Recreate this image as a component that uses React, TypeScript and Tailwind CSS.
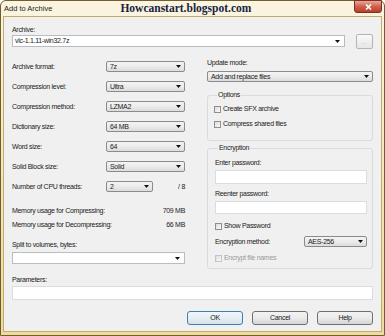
import React from 'react'

const font = "font-['Liberation_Sans',Arial,sans-serif]"
const txt = 'text-[7px] leading-[10px] tracking-[-0.3px] text-[#1b1b1b]'

const Arrow = () => (
  <svg width="5" height="3" viewBox="0 0 5 3" className="shrink-0">
    <path d="M0 0h5L2.5 3z" fill="#111" />
  </svg>
)

// non-editable dropdown, win7 gradient look
const Select = ({ value, className = '' }: { value: string; className?: string }) => (
  <div
    className={`h-[11px] flex items-center justify-between pl-[3px] pr-[3px] rounded-[2px] border border-[#8b8b8b] bg-gradient-to-b from-[#f4f4f4] via-[#ebebeb] to-[#dcdcdc] ${className}`}
  >
    <span className={txt}>{value}</span>
    <Arrow />
  </div>
)

// editable combo, white field
const Combo = ({ value = '', className = '' }: { value?: string; className?: string }) => (
  <div
    className={`h-[12px] flex items-center justify-between pl-[2px] pr-[4px] border border-[#b9bcc2] bg-white ${className}`}
  >
    <span className={txt}>{value}</span>
    <Arrow />
  </div>
)

const Field = ({ className = '' }: { className?: string }) => (
  <div className={`bg-white border border-[#d7dde3] ${className}`} />
)

const Check = ({ label, disabled = false }: { label: string; disabled?: boolean }) => (
  <div className="h-[10px] flex items-center gap-[2px]">
    <div
      className={`w-[7px] h-[7px] border bg-gradient-to-br from-[#dcdcdc] to-[#fbfbfb] ${
        disabled ? 'border-[#c4c4c4]' : 'border-[#8f8f8f]'
      }`}
    />
    <span className={`${txt} ${disabled ? '!text-[#9a9a9a]' : ''}`}>{label}</span>
  </div>
)

const Group = ({ title, children, className = '' }: { title: string; children: React.ReactNode; className?: string }) => (
  <fieldset className={`border border-[#d5dce2] rounded-[3px] ${className}`}>
    <legend className={`${txt} ml-[3px] px-[1px]`}>{title}</legend>
    {children}
  </fieldset>
)

const Btn = ({ label, primary = false }: { label: string; primary?: boolean }) => (
  <button
    className={`w-[56px] h-[14px] rounded-[3px] border flex items-center justify-center ${txt} ${
      primary
        ? 'border-[#3c7fb1] bg-gradient-to-b from-[#f1f6fa] via-[#e6eef4] to-[#d6e1ea]'
        : 'border-[#707070] bg-gradient-to-b from-[#f2f2f2] via-[#ebebeb] to-[#d4d4d4]'
    }`}
  >
    {label}
  </button>
)

const leftRows: [string, string][] = [
  ['Archive format:', '7z'],
  ['Compression level:', 'Ultra'],
  ['Compression method:', 'LZMA2'],
  ['Dictionary size:', '64 MB'],
  ['Word size:', '64'],
  ['Solid Block size:', 'Solid'],
]

export default function App() {
  return (
    <div className={`w-[385px] h-[336px] ${font}`}>
      <div className="w-full h-full flex flex-col px-[2px] pb-[3px] rounded-t-[6px] border border-[#6f5e34] bg-gradient-to-b from-[#fbf5e1] via-[#f4e7b9] to-[#efdb9c]">
        {/* Title bar */}
        <div className="h-[15px] flex items-start">
          <span className="pl-[1px] mt-[3px] text-[7.5px] leading-[10px] text-[#222]">Add to Archive</span>
          <span className="ml-[68px] mt-[1px] font-['Liberation_Serif',serif] font-bold text-[11.5px] leading-[13px] text-[#17223f]">
            Howcanstart.blogspot.com
          </span>
          <div className="ml-auto -mt-[1px] w-[28px] h-[13px] rounded-b-[3px] border border-[#7b2e22] bg-gradient-to-b from-[#e9a899] via-[#d0604c] to-[#b8402c] flex items-center justify-center">
            <svg width="7" height="6" viewBox="0 0 7 6">
              <path d="M1 0.5L6 5.5M6 0.5L1 5.5" stroke="#fff" strokeWidth="1.6" />
            </svg>
          </div>
        </div>

        {/* Client area */}
        <div className="flex-1 flex flex-col bg-[#f0f0f0] border border-[#c2ab6c] px-[8px] pt-[8px]">
          <span className={txt}>Archive:</span>
          <div className="flex items-start">
            <Combo value="vlc-1.1.11-win32.7z" className="flex-1" />
            <div className="ml-[11px] -mt-[1px] w-[17px] h-[15px] rounded-[2px] border border-[#b4b4b4] bg-gradient-to-b from-[#f9f9f9] to-[#e6e6e6] flex items-center justify-center">
              <span className="text-[6px] leading-none text-[#aaa]">...</span>
            </div>
          </div>

          <div className="mt-[6px] h-[215px] flex gap-[22px]">
            {/* Left column */}
            <div className="w-[173px] flex flex-col pt-[1.5px]">
              {leftRows.map(([label, value]) => (
                <div key={label} className="h-[20px] flex items-center">
                  <span className={`${txt} w-[94px]`}>{label}</span>
                  <Select value={value} className="w-[79px]" />
                </div>
              ))}
              <div className="h-[20px] flex items-center">
                <span className={`${txt} w-[94px]`}>Number of CPU threads:</span>
                <Select value="2" className="w-[47px]" />
                <span className={`${txt} ml-auto`}>/ 8</span>
              </div>
              <div className={`mt-[9.5px] flex justify-between ${txt}`}>
                <span>Memory usage for Compressing:</span>
                <span>709 MB</span>
              </div>
              <div className={`mt-[4px] flex justify-between ${txt}`}>
                <span>Memory usage for Decompressing:</span>
                <span>66 MB</span>
              </div>
              <span className={`mt-[10px] ${txt}`}>Split to volumes, bytes:</span>
              <Combo className="mt-[2px]" />
            </div>

            {/* Right column */}
            <div className="flex-1 flex flex-col pt-[3px]">
              <span className={txt}>Update mode:</span>
              <Select value="Add and replace files" className="mt-[3px]" />

              <Group title="Options" className="mt-[8px] pl-[6px] pb-[11px]">
                <div className="mt-[4px] flex flex-col gap-[5px]">
                  <Check label="Create SFX archive" />
                  <Check label="Compress shared files" />
                </div>
              </Group>

              <Group title="Encryption" className="mt-[2px] pl-[7px] pr-[5px] pb-[5px]">
                <div className="flex flex-col">
                  <span className={`mt-[5px] ${txt}`}>Enter password:</span>
                  <Field className="mt-[2px] h-[14px]" />
                  <span className={`mt-[5px] ${txt}`}>Reenter password:</span>
                  <Field className="mt-[2px] h-[13px]" />
                  <div className="mt-[7px]">
                    <Check label="Show Password" />
                  </div>
                  <div className="mt-[5px] h-[11px] flex items-center">
                    <span className={`${txt} w-[89px]`}>Encryption method:</span>
                    <Select value="AES-256" className="flex-1" />
                  </div>
                  <div className="mt-[6px]">
                    <Check label="Encrypt file names" disabled />
                  </div>
                </div>
              </Group>
            </div>
          </div>

          <span className={`mt-[5px] ${txt}`}>Parameters:</span>
          <Field className="mt-[1px] h-[14px]" />

          <div className="mt-[11px] flex justify-end gap-[9px]">
            <Btn label="OK" primary />
            <Btn label="Cancel" />
            <Btn label="Help" />
          </div>
        </div>
      </div>
    </div>
  )
}
